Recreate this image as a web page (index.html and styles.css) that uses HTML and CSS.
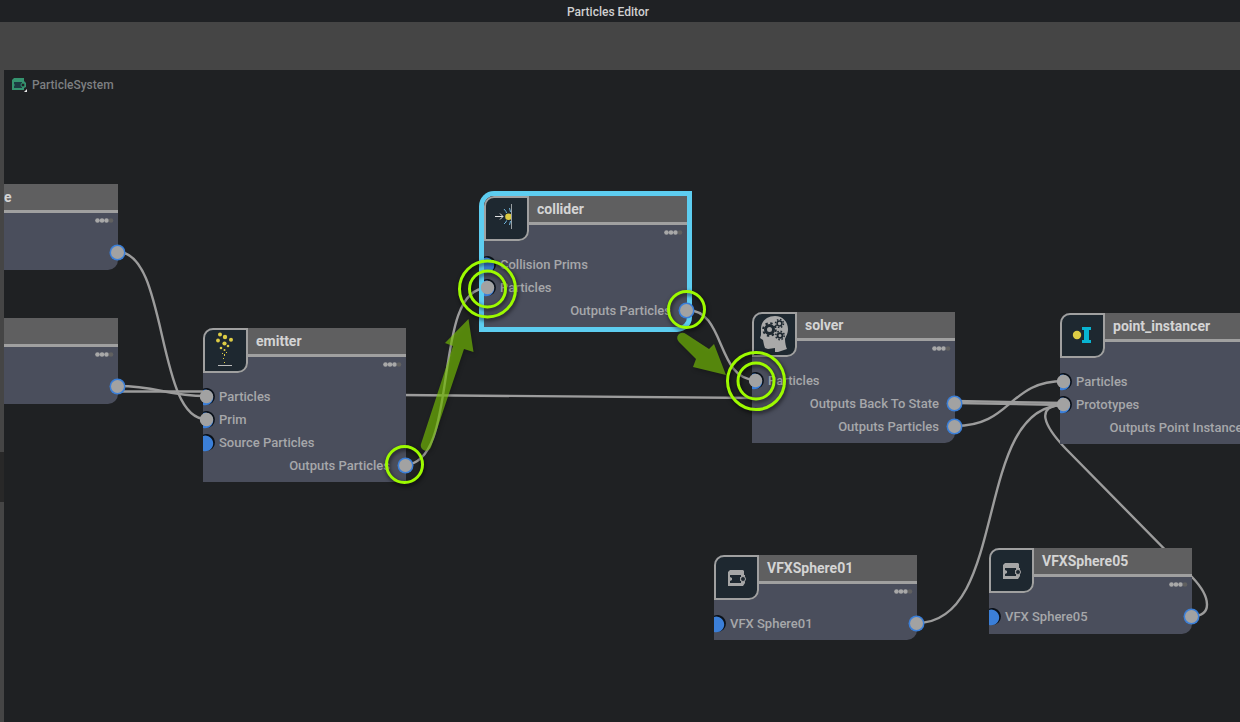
FILE: index.html
```html
<!DOCTYPE html>
<html lang="en">
<head>
<meta charset="utf-8">
<title>Particles Editor</title>
<link rel="stylesheet" href="styles.css">
</head>
<body>
<svg class="defs" aria-hidden="true">
  <symbol id="port-in" viewBox="0 0 18 18">
    <path class="port-shade" d="M3 0.700A8.500 8.500 0 1 1 3 16.300Z"/>
    <path class="port-blue" d="M3 1.900A8 7.800 0 1 1 3 16.900Z"/>
  </symbol>
  <symbol id="port-in-on" viewBox="0 0 18 18">
    <use href="#port-in" width="18" height="18"/>
    <circle class="port-core" cx="6.500" cy="8.500" r="6.700"/>
  </symbol>
  <symbol id="port-out" viewBox="0 0 16 16">
    <circle class="port-blue" cx="7.500" cy="7.500" r="8"/>
    <circle class="port-core" cx="7.500" cy="7.500" r="6.500"/>
  </symbol>
  <symbol id="dots" viewBox="0 0 19 5">
    <circle cx="2.500" cy="2.500" r="2.300" fill="#a8a8a8"/>
    <circle cx="7" cy="2.500" r="2.300" fill="#a8a8a8"/>
    <circle cx="11.500" cy="2.500" r="2.300" fill="#a8a8a8"/>
    <circle cx="16" cy="2.500" r="2.300" fill="#606060"/>
  </symbol>
  <symbol id="prim" viewBox="0 0 18 16">
    <path fill="currentColor" fill-rule="evenodd" d="M2 0H15L16 1V5H17V13L15 16H0V2ZM2 5V7L4 8V10L2 11V13H13V11H12V7H13V5Z"/>
    <circle cx="15" cy="9" r="2.500" fill="#1e2830" stroke="currentColor"/>
  </symbol>
</svg>

<header class="titlebar"><h1>Particles Editor</h1></header>
<div class="toolbar"></div>
<div class="workspace">
  <div class="splitter"><span class="splitter-grip"></span></div>
  <main class="canvas">
    <nav class="crumb">
      <svg class="crumb-icon" width="17" height="16" viewBox="0 0 17 16">
        <path fill="#35946f" d="M2 1H12V4L14 6V10L12 11V13H0V3Z"/>
        <path fill="#1d3b42" d="M2 5H10V11H2V9L3 8L2 7Z"/>
        <circle cx="11" cy="8" r="2" fill="#1f2123" stroke="#35946f"/>
        <path fill="#e8e8e8" d="M15 12V15H12Z"/>
      </svg>
      <a href="#">ParticleSystem</a>
    </nav>

    <svg class="wires" aria-hidden="true"><g transform="translate(-4 -70)">
      <path d="M118 252C168 252 156 419 206 419"/>
      <path d="M118 386C158 386 166 396 206 396"/>
      <path d="M118 391.500H206"/>
      <path d="M400 395L756 398"/>
      <path d="M404 465C462 465 430 288 487 288"/>
      <path d="M687 310C726 310 716 380 756 380"/>
      <path d="M955 401L1064 403"/>
      <path d="M955 403L1064 405"/>
      <path d="M955 426C1012 426 1008 381 1064 381"/>
      <path d="M917 623C1010 623 972 405 1064 405"/>
      <path d="M1192 616C1212 616 1212 598 1192 577L1066 449C1044 426 1034 405 1064 405"/>
    </g></svg>

    <article class="node source-a">
      <div class="node-head"><h2>e</h2></div>
      <div class="node-tools"><button aria-label="Node display"><svg width="19" height="5"><use href="#dots"/></svg></button></div>
      <div class="row out"><svg class="port-o"><use href="#port-out"/></svg></div>
    </article>
    <article class="node source-b">
      <div class="node-head"></div>
      <div class="node-tools"><button aria-label="Node display"><svg width="19" height="5"><use href="#dots"/></svg></button></div>
      <div class="row out"><svg class="port-o"><use href="#port-out"/></svg></div>
    </article>

    <article class="node emitter">
      <div class="node-head has-icon"><h2>emitter</h2></div>
      <div class="icon"><svg viewBox="0 0 45 45">
        <g fill="#ddcc45"><circle cx="17" cy="6.500" r="2"/><circle cx="22" cy="9" r="2.200"/><circle cx="15" cy="12.500" r="1.900"/><circle cx="28" cy="11.700" r="2"/><circle cx="21.500" cy="15.500" r="2.100"/><circle cx="18" cy="20" r="1.300"/><circle cx="25" cy="18" r="1.300"/><circle cx="21.500" cy="22" r="1"/><path d="M19 25h1v1h-1zM23 24h1v1h-1zM21 26h1v2h-1zM20 30h1v1h-1zM21 34h1v1h-1z"/></g>
        <path d="M15 37.500H29" stroke="#bcbcbc"/>
      </svg></div>
      <div class="node-tools"><button aria-label="Node display"><svg width="19" height="5"><use href="#dots"/></svg></button></div>
      <div class="row"><svg class="port-i"><use href="#port-in-on"/></svg><span>Particles</span></div>
      <div class="row"><svg class="port-i"><use href="#port-in-on"/></svg><span>Prim</span></div>
      <div class="row"><svg class="port-i"><use href="#port-in"/></svg><span>Source Particles</span></div>
      <div class="row out"><span>Outputs Particles</span><svg class="port-o"><use href="#port-out"/></svg></div>
    </article>

    <article class="node collider selected">
      <div class="node-head has-icon"><h2>collider</h2></div>
      <div class="icon"><svg viewBox="0 0 45 45" fill="none">
        <path d="M11 20.500H19M16 17.500L19 20.500L16 23.500" stroke="#e2e2e2"/>
        <path d="M20 13L22 15.500L22.500 17M25.500 12L26.500 16M20 28L22 26L22.500 24.500M25.500 29L26.500 25" stroke="#6fb4dc"/>
        <circle cx="24.500" cy="20.700" r="3.300" fill="#ddcc45"/>
        <path d="M27.500 8V33" stroke="#9aa0a3"/>
      </svg></div>
      <div class="node-tools"><button aria-label="Node display"><svg width="19" height="5"><use href="#dots"/></svg></button></div>
      <div class="row"><svg class="port-i"><use href="#port-in"/></svg><span>Collision Prims</span></div>
      <div class="row"><svg class="port-i"><use href="#port-in-on"/></svg><span>Particles</span></div>
      <div class="row out"><span>Outputs Particles</span><svg class="port-o"><use href="#port-out"/></svg></div>
    </article>

    <article class="node solver">
      <div class="node-head has-icon"><h2>solver</h2></div>
      <div class="icon"><svg viewBox="0 0 45 45">
        <path fill="#a9a9a9" d="M9 17C9 9 15 4 23 4C31 4 36 10 36 17C36 22 34 24 33 27C33 31 34 35 35 37L26 40H23V36L16 37L13 36L12 33L11 28L8 26L9 23Z"/>
        <g fill="none" stroke="#1e2830">
          <circle cx="17.500" cy="17.500" r="4" stroke-width="3"/><circle cx="17.500" cy="17.500" r="6.300" stroke-width="2" stroke-dasharray="2.400 2.550"/>
          <circle cx="27.500" cy="11.500" r="2.400" stroke-width="1.500"/><circle cx="27.500" cy="11.500" r="4" stroke-width="1.500" stroke-dasharray="1.500 1.640"/>
          <circle cx="28" cy="23.500" r="2.400" stroke-width="1.800"/><circle cx="28" cy="23.500" r="4.200" stroke-width="1.500" stroke-dasharray="1.600 1.700"/>
        </g>
      </svg></div>
      <div class="node-tools"><button aria-label="Node display"><svg width="19" height="5"><use href="#dots"/></svg></button></div>
      <div class="row"><svg class="port-i"><use href="#port-in-on"/></svg><span>Particles</span></div>
      <div class="row out"><span>Outputs Back To State</span><svg class="port-o"><use href="#port-out"/></svg></div>
      <div class="row out"><span>Outputs Particles</span><svg class="port-o"><use href="#port-out"/></svg></div>
    </article>

    <article class="node instancer">
      <div class="node-head has-icon"><h2>point_instancer</h2></div>
      <div class="icon"><svg viewBox="0 0 45 45">
        <circle cx="17" cy="22" r="4.200" fill="#ddcc45"/>
        <path fill="#08b4d2" d="M22 14H31V17H29V27H31V30H22V27H24V17H22Z"/>
      </svg></div>
      <div class="node-tools"></div>
      <div class="row"><svg class="port-i"><use href="#port-in-on"/></svg><span>Particles</span></div>
      <div class="row"><svg class="port-i"><use href="#port-in-on"/></svg><span>Prototypes</span></div>
      <div class="row out"><span>Outputs Point Instancer</span><svg class="port-o"><use href="#port-out"/></svg></div>
    </article>

    <article class="node sphere1">
      <div class="node-head has-icon"><h2>VFXSphere01</h2></div>
      <div class="icon"><svg class="prim-icon" width="18" height="16"><use href="#prim"/></svg></div>
      <div class="node-tools"><button aria-label="Node display"><svg width="19" height="5"><use href="#dots"/></svg></button></div>
      <div class="row both"><svg class="port-i"><use href="#port-in"/></svg><span>VFX Sphere01</span><svg class="port-o"><use href="#port-out"/></svg></div>
    </article>
    <article class="node sphere5">
      <div class="node-head has-icon"><h2>VFXSphere05</h2></div>
      <div class="icon"><svg class="prim-icon" width="18" height="16"><use href="#prim"/></svg></div>
      <div class="node-tools"><button aria-label="Node display"><svg width="19" height="5"><use href="#dots"/></svg></button></div>
      <div class="row both"><svg class="port-i"><use href="#port-in"/></svg><span>VFX Sphere05</span><svg class="port-o"><use href="#port-out"/></svg></div>
    </article>

    <svg class="notes" aria-hidden="true"><g transform="translate(-4 -70)">
      <g class="arrow">
        <path d="M421 444L453 346L445 343L468.500 319L473.500 352L464 349L431 447A5 5 0 0 1 421 444Z"/>
        <path d="M686 334L709 349L714 344L726 375L693 367L696 359L679 342A5 5 0 0 1 686 334Z"/>
      </g>
      <g class="ring">
        <circle cx="404.500" cy="464.500" r="18"/>
        <circle cx="487.500" cy="289" r="18"/><circle cx="487.500" cy="289" r="28"/>
        <circle cx="686.500" cy="309.500" r="18"/>
        <circle cx="756" cy="381" r="18"/><circle cx="756" cy="381" r="28.500"/>
      </g>
    </g></svg>
  </main>
</div>
</body>
</html>
```
FILE: styles.css
```css
* { box-sizing: border-box; }

body {
  margin: 0;
  min-height: 100vh;
  display: flex;
  flex-direction: column;
  background: #1f2123;
  color: #a6a7aa;
  font: 500 13px/16px Roboto, sans-serif;
}

.defs { position: absolute; width: 0; height: 0; }

.titlebar {
  padding: 4px 24px 2px 0;
  background: #1f2124;
  text-align: center;
}
.titlebar h1 { margin: 0; font: 500 12px/16px Roboto, sans-serif; color: #d0d0d0; }

.toolbar { height: 48px; background: #454545; }

.workspace { flex: 1; display: flex; }

.splitter {
  width: 4px;
  display: flex;
  flex-direction: column;
  justify-content: center;
  background: #454545;
}
.splitter-grip { height: 50px; margin-top: 162px; background: #282828; }

.canvas { position: relative; flex: 1; overflow: hidden; background: #1f2123; }

.crumb { display: flex; align-items: center; gap: 3px; padding: 7px 8px; }
.crumb a { color: #7d7f81; font-size: 12px; text-decoration: none; }

.wires, .notes { position: absolute; left: 0; top: 0; width: 100%; height: 100%; }
.wires { fill: none; stroke: #9c9c9c; stroke-width: 2.4; }
.notes { pointer-events: none; }
.arrow { fill: rgba(126, 206, 3, 0.6); filter: drop-shadow(1px 2px 2px rgba(0, 0, 0, 0.4)); }
.ring { fill: none; stroke: #9dfa00; stroke-width: 3; filter: drop-shadow(1px 2px 2px rgba(0, 0, 0, 0.7)); }

.node {
  position: absolute;
  width: 203px;
  padding-bottom: 5px;
  background: #4a4e5c;
  border-radius: 10px 0 10px 0;
}
.source-a, .source-b { left: 0; width: 114px; padding-bottom: 6px; border-top-left-radius: 0; }
.source-a { top: 114px; }
.source-b { top: 248px; }
.emitter { left: 199px; top: 258px; border-bottom-right-radius: 0; }
.collider { left: 480px; top: 126px; }
.solver { left: 748px; top: 242px; }
.instancer { left: 1056px; top: 243px; }
.sphere1 { left: 710px; top: 485px; }
.sphere5 { left: 985px; top: 478px; padding-bottom: 6px; }

.selected { box-shadow: 0 0 0 5px #5dcdf0; }

.node-head {
  height: 29px;
  padding: 5px 8px 0 0;
  border-bottom: 3px solid #a0a0a0;
  border-top-left-radius: inherit;
  background: #5f5f60;
}
.node-head.has-icon { padding-left: 53px; }
.node-head h2 { margin: 0; font: 700 14px/17px Roboto, sans-serif; color: #d4d4d4; }

.icon {
  position: absolute;
  left: 0;
  top: 0;
  width: 45px;
  height: 45px;
  display: grid;
  place-items: center;
  border-radius: 10px 0 10px 0;
  background: #1e2830;
  box-shadow: inset 0 0 0 2px #a0a0a0;
}
.prim-icon { color: #a6a6a6; }

.node-tools { height: 28px; padding: 5px 4px; display: flex; justify-content: flex-end; align-items: flex-start; }
.node-tools button { display: flex; padding: 0; border: 0; background: none; }

.row { height: 23px; display: flex; align-items: center; gap: 1px; white-space: nowrap; }
.row.out { justify-content: flex-end; gap: 8px; }
.row.both .port-o { margin-left: auto; }
.port-i { flex: none; width: 18px; height: 18px; margin-left: -3px; }
.port-o { flex: none; width: 16px; height: 16px; margin-right: -8px; overflow: visible; }
.port-o use { overflow: visible; }
#port-out { overflow: visible; }
.port-shade { fill: #0b1119; }
.port-blue { fill: #3b7fd8; }
.port-core { fill: #a2a2a2; }
```
